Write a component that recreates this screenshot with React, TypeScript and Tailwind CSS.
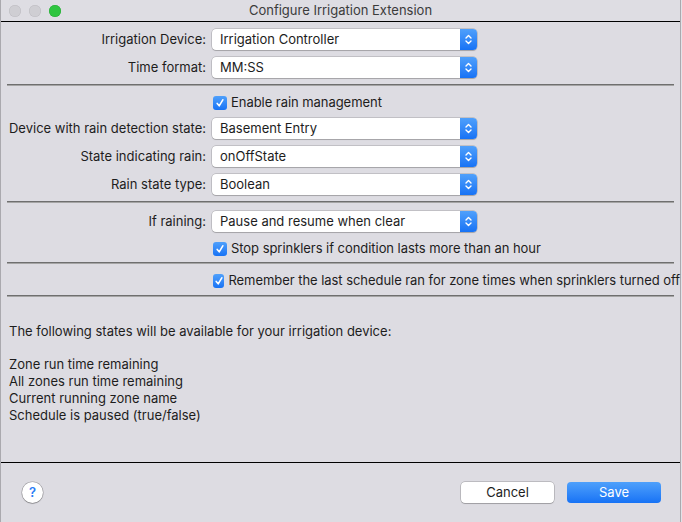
import React from "react";

const font = { fontFamily: "Inter, 'Liberation Sans', sans-serif" };

function Stepper() {
  return (
    <div className="flex h-full w-[17px] items-center justify-center rounded-r-[4px] bg-gradient-to-b from-[#4fa0fb] to-[#1672f5]">
      <svg width="9" height="13" viewBox="0 0 9 13" fill="none" stroke="white" strokeWidth="1.4" strokeLinecap="round" strokeLinejoin="round">
        <path d="M2 5 L4.5 2.5 L7 5" />
        <path d="M2 8 L4.5 10.5 L7 8" />
      </svg>
    </div>
  );
}

function Select({ value }: { value: string }) {
  return (
    <div className="flex h-[21px] w-[265px] items-center justify-between rounded-[4px] bg-white shadow-[0_0_0_0.5px_rgba(0,0,0,0.25),0_1px_1px_rgba(0,0,0,0.15)]">
      <span className="pl-[8px] text-[13px] text-[#1d1d1d]">{value}</span>
      <Stepper />
    </div>
  );
}

function Row({ label, value, className }: { label: string; value: string; className?: string }) {
  return (
    <div className={"flex h-[21px] items-center " + (className ?? "")}>
      <div className="w-[205px] text-right text-[13px] text-[#1d1d1d]">{label}</div>
      <div className="ml-[6px]">
        <Select value={value} />
      </div>
    </div>
  );
}

function Check({ label, className }: { label: string; className?: string }) {
  return (
    <div className={"flex h-[18px] items-center pl-[212px] " + (className ?? "")}>
      <div className="flex h-[14px] w-[14px] items-center justify-center rounded-[3px] bg-gradient-to-b from-[#4fa0fb] to-[#1672f5]">
        <svg width="10" height="10" viewBox="0 0 10 10" fill="none" stroke="white" strokeWidth="1.6" strokeLinecap="round" strokeLinejoin="round">
          <path d="M2.2 5.4 L4.2 7.8 L7.8 1.8" />
        </svg>
      </div>
      <span className="ml-[4px] whitespace-nowrap text-[13px] tracking-[-0.05px] text-[#1d1d1d]">{label}</span>
    </div>
  );
}

function Divider({ className }: { className?: string }) {
  return <div className={"mx-[6px] h-[2px] border-t border-[#6f6f6f] border-b-[#a5a5a5] border-b " + (className ?? "")} />;
}

export default function App() {
  return (
    <div className="h-[522px] w-[682px] overflow-hidden bg-[#e3e2e8]" style={font}>
      <div className="flex h-full w-[681px] flex-col border-x border-[#aaa9ae] bg-[#dddce2]">
        <div className="relative flex h-[22px] shrink-0 items-center justify-center border-b border-black bg-[#dedde3]">
          <div className="absolute left-[8px] top-[5px] flex gap-[8px]">
            <span className="h-[12px] w-[12px] rounded-full bg-[#cfced3] shadow-[inset_0_0_0_0.5px_#bcbbc0]" />
            <span className="h-[12px] w-[12px] rounded-full bg-[#cfced3] shadow-[inset_0_0_0_0.5px_#bcbbc0]" />
            <span className="h-[12px] w-[12px] rounded-full bg-[#2fc540] shadow-[inset_0_0_0_0.5px_#26a935]" />
          </div>
          <span className="text-[13px] text-[#3b3b3b]">Configure Irrigation Extension</span>
        </div>

        <div className="flex flex-1 flex-col">
          <Row className="mt-[7px]" label="Irrigation Device:" value="Irrigation Controller" />
          <Row className="mt-[7px]" label="Time format:" value="MM:SS" />
          <Divider className="mt-[6px]" />
          <Check className="mt-[8px]" label="Enable rain management" />
          <Row className="mt-[6px]" label="Device with rain detection state:" value="Basement Entry" />
          <Row className="mt-[7px]" label="State indicating rain:" value="onOffState" />
          <Row className="mt-[7px]" label="Rain state type:" value="Boolean" />
          <Divider className="mt-[6px]" />
          <Row className="mt-[8px]" label="If raining:" value="Pause and resume when clear" />
          <Check className="mt-[8px]" label="Stop sprinklers if condition lasts more than an hour" />
          <Divider className="mt-[4px]" />
          <Check className="mt-[8px]" label="Remember the last schedule ran for zone times when sprinklers turned off" />
          <Divider className="mt-[5px]" />

          <div className="mt-[26px] pl-[8px] text-[13px] leading-[17px] text-[#1d1d1d]">
            <p>The following states will be available for your irrigation device:</p>
            <p className="mt-[16px]">Zone run time remaining</p>
            <p>All zones run time remaining</p>
            <p>Current running zone name</p>
            <p>Schedule is paused (true/false)</p>
          </div>
        </div>

        <div className="flex h-[60px] shrink-0 items-center border-t border-black pl-[21px] pr-[19px]">
          <div className="flex h-[21px] w-[21px] items-center justify-center rounded-full bg-white text-[13px] font-semibold text-[#2a7df6] shadow-[0_0_0_0.5px_rgba(0,0,0,0.3),0_1px_1px_rgba(0,0,0,0.2)]">
            ?
          </div>
          <div className="ml-auto flex gap-[13px]">
            <button className="h-[21px] w-[93px] rounded-[4px] bg-white text-[13px] text-[#1d1d1d] shadow-[0_0_0_0.5px_rgba(0,0,0,0.3),0_1px_1px_rgba(0,0,0,0.15)]">
              Cancel
            </button>
            <button className="h-[21px] w-[94px] rounded-[4px] bg-gradient-to-b from-[#4ea0fb] to-[#1672f5] text-[13px] text-white">
              Save
            </button>
          </div>
        </div>
      </div>
    </div>
  );
}
